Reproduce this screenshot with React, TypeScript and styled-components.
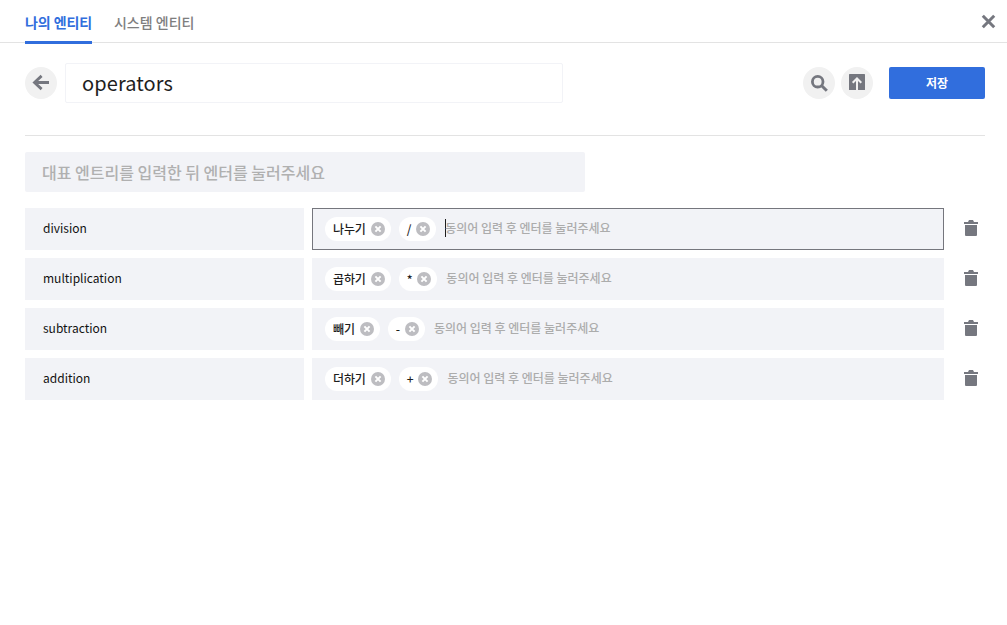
import React from 'react';
import styled, { createGlobalStyle } from 'styled-components';

const GlobalStyle = createGlobalStyle`
  * { box-sizing: border-box; }
  body {
    margin: 0;
    background: #fff;
    color: #1e1e1e;
    font-family: "Noto Sans CJK KR", "Noto Sans", sans-serif;
    font-size: 12px;
    font-weight: 500;
  }
  button { font: inherit; border: 0; padding: 0; margin: 0; background: none; cursor: pointer; }
  svg { display: block; }
`;

const Header = styled.header`
  display: flex;
  justify-content: space-between;
  height: 43px;
  padding: 0 11px 0 25px;
  border-bottom: 1px solid #e3e3e3;
`;

const Tabs = styled.nav`
  display: flex;
  gap: 22px;
  height: 44px;
`;

const Tab = styled.button<{ $active?: boolean }>`
  height: 44px;
  padding-top: 2px;
  line-height: 41px;
  font-size: 14px;
  letter-spacing: ${(p) => (p.$active ? '-0.1px' : '0')};
  font-weight: ${(p) => (p.$active ? 700 : 500)};
  color: ${(p) => (p.$active ? '#316edd' : '#7e7e7e')};
  border-bottom: 3px solid ${(p) => (p.$active ? '#316edd' : 'transparent')};
  white-space: nowrap;
`;

const CloseButton = styled.button`
  align-self: flex-start;
  margin-top: 14px;
`;

const Main = styled.main`
  padding: 20px 22px 0 25px;
`;

const Toolbar = styled.div`
  display: flex;
  align-items: center;
  height: 73px;
  padding-bottom: 32px;
  border-bottom: 1px solid #e3e3e3;
`;

const RoundButton = styled.button`
  display: flex;
  align-items: center;
  justify-content: center;
  width: 32px;
  height: 32px;
  border-radius: 50%;
  background: #f1f1f1;
`;

const NameField = styled.div`
  width: 498px;
  height: 40px;
  margin-left: 8px;
  padding-left: 16px;
  border: 1px solid #f2f3f7;
  border-radius: 2px;
  font-size: 20px;
  font-weight: 400;
  letter-spacing: 0.1px;
  line-height: 37px;
`;

const Actions = styled.div`
  display: flex;
  gap: 6px;
  margin-left: auto;
`;

const SaveButton = styled.button`
  width: 96px;
  height: 32px;
  margin-left: 10px;
  border-radius: 2px;
  background: #316edd;
  color: #fff;
  font-weight: 700;
  line-height: 32px;
`;

const EntryField = styled.div`
  width: 560px;
  height: 40px;
  margin: 16px 0;
  padding-left: 17px;
  border-radius: 2px;
  background: #f2f3f7;
  color: #b0b0b0;
  font-size: 16px;
  line-height: 40px;
`;

const Rows = styled.div`
  display: flex;
  flex-direction: column;
  gap: 8px;
`;

const Row = styled.div`
  display: grid;
  grid-template-columns: 279px 632px auto;
  column-gap: 8px;
  align-items: center;
  height: 42px;
`;

const EntryName = styled.div`
  height: 42px;
  padding-left: 18px;
  background: #f2f3f7;
  font-size: 12px;
  font-weight: 400;
  color: #111;
  line-height: 39px;
`;

const Synonyms = styled.div<{ $focused?: boolean }>`
  display: flex;
  align-items: center;
  height: 42px;
  padding-left: 12px;
  background: #f2f3f7;
  border: 1px solid ${(p) => (p.$focused ? '#75767d' : '#f2f3f7')};
`;

const Chip = styled.span`
  display: flex;
  align-items: center;
  gap: 5px;
  height: 24px;
  margin-right: 8px;
  padding: 0 6px 0 8px;
  border-radius: 12px;
  background: #fff;
  letter-spacing: -0.15px;
  line-height: 24px;
`;

const Caret = styled.span`
  width: 1px;
  height: 18px;
  margin: -2px -1.6px 0 0.6px;
  background: #1e1e1e;
`;

const Hint = styled.span`
  margin-left: 1px;
  color: #acacac;
  line-height: 38px;
  height: 40px;
`;

const DeleteButton = styled.button`
  margin: 0 0 2px 12px;
`;

const GREY = '#75777f';

const CloseIcon = () => (
  <svg width="16" height="16" viewBox="0 0 16 16">
    <path d="M2.8 1.8 14.2 13.2M14.2 1.8 2.8 13.2" stroke={GREY} strokeWidth="3" />
  </svg>
);

const BackIcon = () => (
  <svg width="32" height="32" viewBox="0 0 32 32" fill="none" stroke={GREY} strokeWidth="2.8">
    <path d="M9 15.5H24M16.6 8.9 9.5 15.5 16.6 22.1" />
  </svg>
);

const SearchIcon = () => (
  <svg width="32" height="32" viewBox="0 0 32 32" fill="none" stroke={GREY}>
    <circle cx="14.7" cy="14.7" r="5.3" strokeWidth="2.8" />
    <path d="M18.5 18.5 23.8 23.8" strokeWidth="3" />
  </svg>
);

const UploadIcon = () => (
  <svg width="32" height="32" viewBox="0 0 32 32" fill="none">
    <rect x="8" y="7" width="16" height="16" rx="0.5" fill={GREY} />
    <path d="M16 23V12M11.7 15.8 16 11.5 20.3 15.8" stroke="#f1f1f1" strokeWidth="2" />
  </svg>
);

const RemoveIcon = () => (
  <svg width="14" height="14" viewBox="0 0 14 14">
    <circle cx="7" cy="7" r="7" fill="#bdbdc1" />
    <path d="M4.4 4.4 9.6 9.6M9.6 4.4 4.4 9.6" stroke="#fff" strokeWidth="2" />
  </svg>
);

const TrashIcon = () => (
  <svg width="14" height="16" viewBox="0 0 14 16" fill={GREY}>
    <path d="M0 2H4L5 0H9L10 2H14V4H0ZM1 5H13V15Q13 16 12 16H2Q1 16 1 15Z" />
  </svg>
);

const entries = [
  { name: 'division', synonyms: ['나누기', '/'], focused: true },
  { name: 'multiplication', synonyms: ['곱하기', '*'] },
  { name: 'subtraction', synonyms: ['빼기', '-'] },
  { name: 'addition', synonyms: ['더하기', '+'] },
];

export default function App() {
  return (
    <>
      <GlobalStyle />
      <Header>
        <Tabs>
          <Tab $active>나의 엔티티</Tab>
          <Tab>시스템 엔티티</Tab>
        </Tabs>
        <CloseButton aria-label="닫기"><CloseIcon /></CloseButton>
      </Header>
      <Main>
        <Toolbar>
          <RoundButton aria-label="뒤로"><BackIcon /></RoundButton>
          <NameField>operators</NameField>
          <Actions>
            <RoundButton aria-label="검색"><SearchIcon /></RoundButton>
            <RoundButton aria-label="업로드"><UploadIcon /></RoundButton>
            <SaveButton>저장</SaveButton>
          </Actions>
        </Toolbar>
        <EntryField>대표 엔트리를 입력한 뒤 엔터를 눌러주세요</EntryField>
        <Rows>
          {entries.map((entry) => (
            <Row key={entry.name}>
              <EntryName>{entry.name}</EntryName>
              <Synonyms $focused={entry.focused}>
                {entry.synonyms.map((word) => (
                  <Chip key={word}>{word}<RemoveIcon /></Chip>
                ))}
                {entry.focused && <Caret />}
                <Hint>동의어 입력 후 엔터를 눌러주세요</Hint>
              </Synonyms>
              <DeleteButton aria-label="삭제"><TrashIcon /></DeleteButton>
            </Row>
          ))}
        </Rows>
      </Main>
    </>
  );
}
